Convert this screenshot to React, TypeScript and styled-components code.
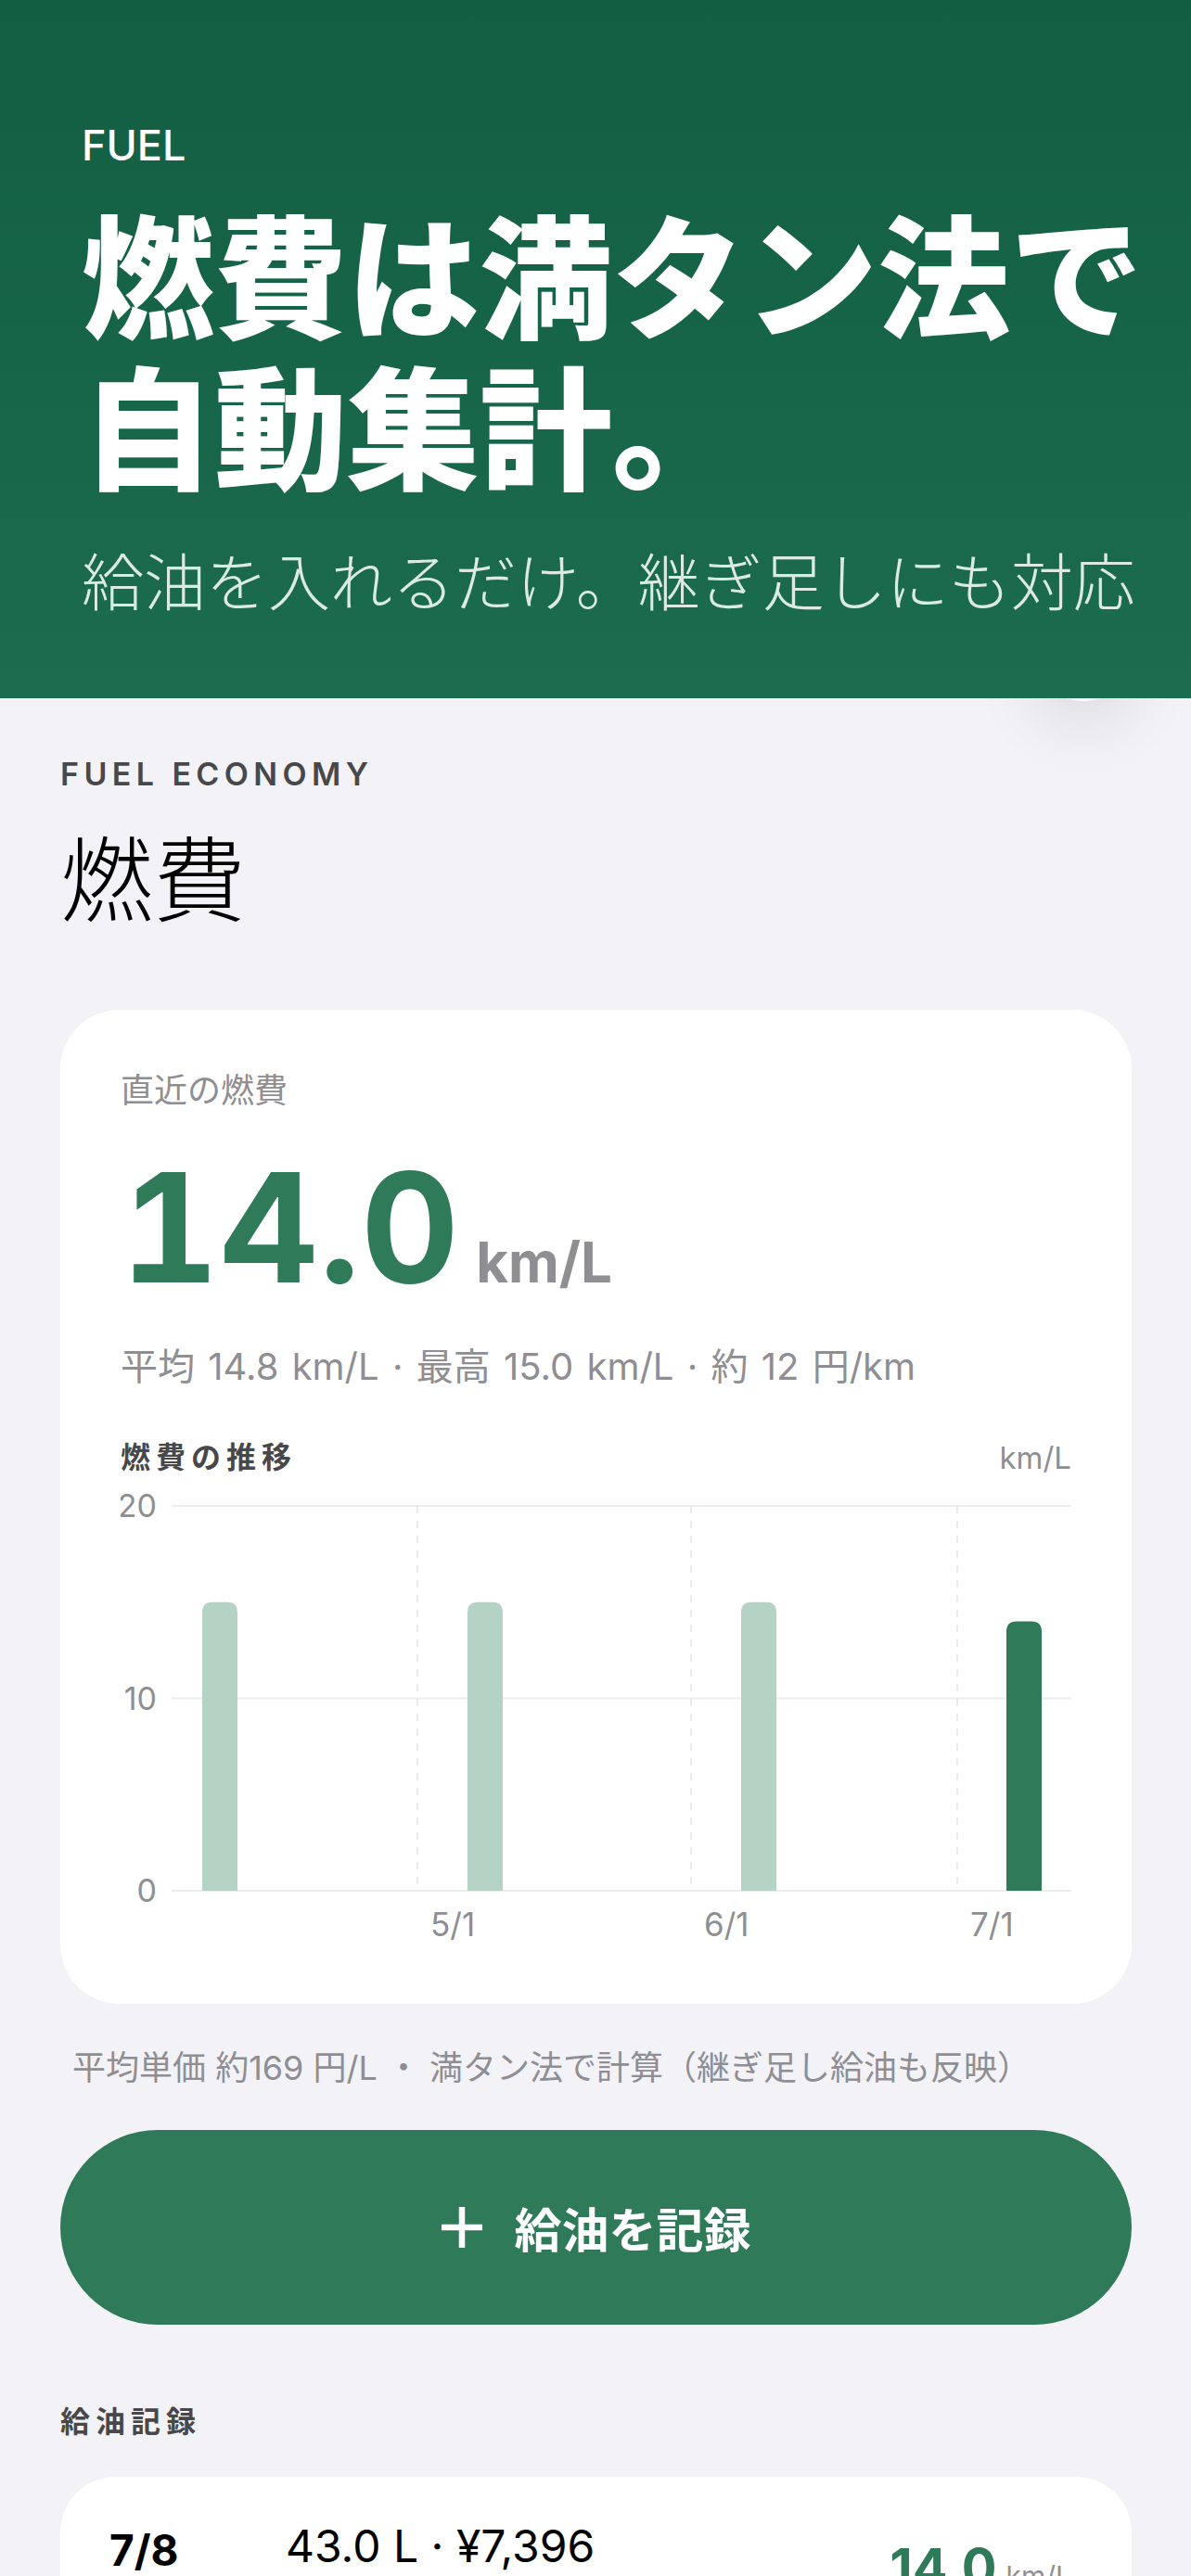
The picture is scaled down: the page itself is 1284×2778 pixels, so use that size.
import React from "react";
import styled, { createGlobalStyle } from "styled-components";

const GlobalStyle = createGlobalStyle`
	body {
		margin: 0;
		background: #f2f2f7;
		font-family: Inter, "Noto Sans CJK JP", sans-serif;
		-webkit-font-smoothing: antialiased;
	}
`;

const GREEN = "#2e7a59";
const GRAY = "#8e8e93";

const Page = styled.div`
	position: relative;
	width: 1284px;
	min-height: 2778px;
	overflow: hidden;
	background: #f2f2f7;
`;

const Hero = styled.header`
	position: relative;
	z-index: 1;
	display: flex;
	flex-direction: column;
	padding: 134px 40px 86px 88px;
	background: linear-gradient(180deg, #125e42 0%, #1c6c50 100%);
	color: #ffffff;
`;

const Eyebrow = styled.div`
	font-size: 45px;
	line-height: 45px;
	font-weight: 500;
`;

const HeroTitle = styled.h1`
	margin: 31px 0 0;
	font-family: "Noto Sans CJK JP", sans-serif;
	font-size: 143px;
	line-height: 163px;
	font-weight: 900;
	white-space: nowrap;
`;

const HeroLead = styled.p`
	margin: 44px 0 0;
	font-family: "Noto Sans CJK JP", sans-serif;
	font-size: 67px;
	line-height: 87px;
	font-weight: 300;
	color: #dcebe2;
	white-space: nowrap;
`;

// floating disc that peeks out under the hero, only its shadow shows
const FloatingDot = styled.div`
	position: absolute;
	top: 640px;
	left: 1110px;
	width: 116px;
	height: 116px;
	border-radius: 50%;
	background: #ffffff;
	box-shadow: 0 28px 70px rgba(0, 0, 0, 0.09);
`;

const Content = styled.main`
	display: flex;
	flex-direction: column;
	padding: 65px 64px 80px 65px;
`;

const Kicker = styled.div`
	font-size: 34px;
	line-height: 34px;
	font-weight: 600;
	letter-spacing: 5.4px;
	color: #48484a;
`;

const SectionTitle = styled.h2`
	margin: 31px 0 0;
	font-family: "Noto Sans CJK JP", sans-serif;
	font-size: 100px;
	line-height: 120px;
	font-weight: 300;
	color: #000000;
`;

const Card = styled.section`
	margin-top: 86px;
	display: flex;
	flex-direction: column;
	padding: 64px 65px 60px;
	background: #ffffff;
	border-radius: 64px;
`;

const CardLabel = styled.div`
	font-size: 36px;
	line-height: 46px;
	color: ${GRAY};
`;

const ValueRow = styled.div`
	margin-top: 44px;
	display: flex;
	align-items: baseline;
	gap: 17px;
`;

const BigValue = styled.span`
	font-size: 164px;
	line-height: 162px;
	font-weight: 700;
	font-variant-numeric: tabular-nums;
	letter-spacing: 1px;
	color: ${GREEN};
`;

const BigUnit = styled.span`
	font-size: 60px;
	font-weight: 700;
	color: ${GRAY};
`;

const Stats = styled.div`
	margin-top: 44px;
	font-size: 40px;
	line-height: 50px;
	word-spacing: 3px;
	color: ${GRAY};
	white-space: nowrap;
`;

const ChartHead = styled.div`
	margin-top: 52px;
	display: flex;
	justify-content: space-between;
	align-items: center;
	line-height: 42px;
`;

const ChartTitle = styled.span`
	font-size: 32px;
	font-weight: 700;
	letter-spacing: 6px;
	color: #48484a;
`;

const ChartUnit = styled.span`
	font-size: 33px;
	color: ${GRAY};
`;

const ChartSvg = styled.svg`
	margin-top: 8px;
	display: block;
	font-family: Inter, "Noto Sans CJK JP", sans-serif;
`;

const Footnote = styled.p`
	margin: 46px 0 0 13px;
	font-size: 36px;
	line-height: 46px;
	color: ${GRAY};
	white-space: nowrap;
`;

const RecordButton = styled.button`
	margin-top: 44px;
	height: 210px;
	display: flex;
	align-items: center;
	justify-content: center;
	gap: 33px;
	border: none;
	border-radius: 105px;
	background: ${GREEN};
	color: #ffffff;
	font-family: "Noto Sans CJK JP", sans-serif;
	font-size: 51px;
	font-weight: 700;
	cursor: pointer;
`;

const ListHeader = styled.div`
	margin-top: 84px;
	font-size: 32px;
	line-height: 42px;
	font-weight: 700;
	letter-spacing: 6px;
	color: #48484a;
`;

const RecordCard = styled.div`
	margin-top: 38px;
	display: grid;
	grid-template-columns: 190px 1fr auto;
	align-items: start;
	padding: 46px 65px 46px 53px;
	background: #ffffff;
	border-radius: 60px;
`;

const RecordDate = styled.div`
	margin-top: 5px;
	font-size: 46px;
	line-height: 56px;
	font-weight: 700;
	color: #000000;
`;

const RecordMain = styled.div`
	display: flex;
	flex-direction: column;
`;

const RecordLine = styled.div<{ muted?: boolean }>`
	font-size: ${(p) => (p.muted ? "34px" : "48px")};
	line-height: ${(p) => (p.muted ? "46px" : "58px")};
	color: ${(p) => (p.muted ? GRAY : "#000000")};
`;

const RecordValue = styled.div`
	align-self: center;
	display: flex;
	align-items: baseline;
	gap: 10px;
`;

const RecordNum = styled.span`
	font-size: 56px;
	line-height: 56px;
	font-weight: 700;
	color: ${GREEN};
`;

const RecordUnit = styled.span`
	font-size: 30px;
	color: ${GRAY};
`;

const history = [
	{ label: "", value: 15.0 },
	{ label: "5/1", value: 15.0 },
	{ label: "6/1", value: 15.0 },
	{ label: "7/1", value: 14.0 },
];

const CHART_W = 1025;
const CHART_H = 500;
const PLOT_TOP = 23;
const PLOT_BOTTOM = 438;
const PLOT_LEFT = 55;
const PLOT_RIGHT = 1027;
const BAR_W = 38;
const barX = [88, 374, 669, 955];
const tickX = [320, 615, 902];

const yFor = (v: number) => PLOT_BOTTOM - (v / 20) * (PLOT_BOTTOM - PLOT_TOP);

const barPath = (x: number, top: number, w: number, bottom: number, r: number) =>
	`M${x},${bottom} V${top + r} Q${x},${top} ${x + r},${top} H${x + w - r} Q${x + w},${top} ${x + w},${top + r} V${bottom} Z`;

const FuelChart = () => (
	<ChartSvg width={CHART_W} height={CHART_H} viewBox={`0 0 ${CHART_W} ${CHART_H}`}>
		{[20, 10, 0].map((v) => (
			<g key={v}>
				<line x1={PLOT_LEFT} x2={PLOT_RIGHT} y1={yFor(v)} y2={yFor(v)} stroke="#ececee" strokeWidth={2} />
				<text x={39} y={yFor(v) + 12} textAnchor="end" fontSize={34} fill={GRAY}>
					{v}
				</text>
			</g>
		))}
		{tickX.map((x, i) => (
			<g key={x}>
				<line x1={x} x2={x} y1={PLOT_TOP} y2={PLOT_BOTTOM} stroke="#e4e4e6" strokeWidth={1.5} strokeDasharray="8 8" />
				<text x={x + 14} y={487} fontSize={35} fill={GRAY}>
					{history[i + 1].label}
				</text>
			</g>
		))}
		{history.map((h, i) => (
			<path
				key={i}
				d={barPath(barX[i], yFor(h.value), BAR_W, PLOT_BOTTOM, 11)}
				fill={i === history.length - 1 ? GREEN : "#b5d3c5"}
			/>
		))}
	</ChartSvg>
);

export default function App() {
	return (
		<Page>
			<GlobalStyle />
			<FloatingDot />
			<Hero>
				<Eyebrow>FUEL</Eyebrow>
				<HeroTitle>
					燃費は満タン法で
					<br />
					自動集計。
				</HeroTitle>
				<HeroLead>給油を入れるだけ。継ぎ足しにも対応</HeroLead>
			</Hero>
			<Content>
				<Kicker>FUEL ECONOMY</Kicker>
				<SectionTitle>燃費</SectionTitle>
				<Card>
					<CardLabel>直近の燃費</CardLabel>
					<ValueRow>
						<BigValue>14.0</BigValue>
						<BigUnit>km/L</BigUnit>
					</ValueRow>
					<Stats>平均 14.8 km/L · 最高 15.0 km/L · 約 12 円/km</Stats>
					<ChartHead>
						<ChartTitle>燃費の推移</ChartTitle>
						<ChartUnit>km/L</ChartUnit>
					</ChartHead>
					<FuelChart />
				</Card>
				<Footnote>平均単価 約169 円/L ・ 満タン法で計算（継ぎ足し給油も反映）</Footnote>
				<RecordButton>
					<svg width="46" height="46" viewBox="0 0 46 46">
						<path d="M23 1v44M1 23h44" stroke="#ffffff" strokeWidth="6.5" />
					</svg>
					給油を記録
				</RecordButton>
				<ListHeader>給油記録</ListHeader>
				<RecordCard>
					<RecordDate>7/8</RecordDate>
					<RecordMain>
						<RecordLine>43.0 L · ¥7,396</RecordLine>
						<RecordLine muted>満タン · ODO 48,260 km</RecordLine>
					</RecordMain>
					<RecordValue>
						<RecordNum>14.0</RecordNum>
						<RecordUnit>km/L</RecordUnit>
					</RecordValue>
				</RecordCard>
			</Content>
		</Page>
	);
}
